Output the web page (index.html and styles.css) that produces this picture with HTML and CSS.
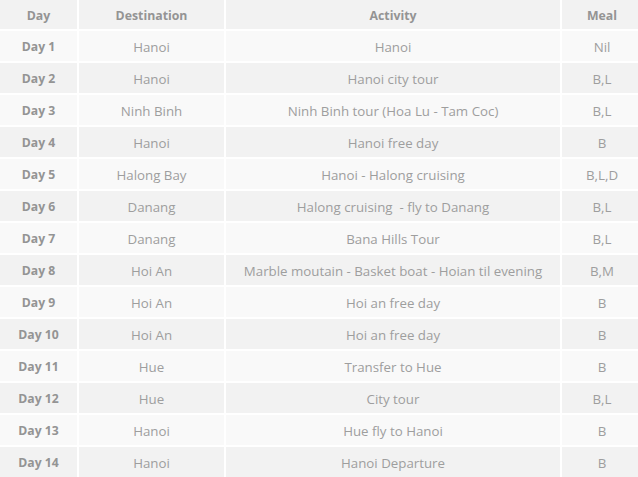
FILE: index.html
```html
<!DOCTYPE html>
<html>
<head>
<meta charset="utf-8">
<link rel="stylesheet" href="styles.css">
</head>
<body>
<table class="tour">
  <colgroup>
    <col class="c-day"><col class="c-dest"><col class="c-act"><col class="c-meal">
  </colgroup>
  <thead>
    <tr><th>Day</th><th>Destination</th><th>Activity</th><th>Meal</th></tr>
  </thead>
  <tbody>
    <tr><td class="day">Day 1</td><td>Hanoi</td><td>Hanoi</td><td>Nil</td></tr>
    <tr><td class="day">Day 2</td><td>Hanoi</td><td>Hanoi city tour</td><td>B,L</td></tr>
    <tr><td class="day">Day 3</td><td>Ninh Binh</td><td>Ninh Binh tour (Hoa Lu - Tam Coc)</td><td>B,L</td></tr>
    <tr><td class="day">Day 4</td><td>Hanoi</td><td>Hanoi free day</td><td>B</td></tr>
    <tr><td class="day">Day 5</td><td>Halong Bay</td><td>Hanoi - Halong cruising</td><td>B,L,D</td></tr>
    <tr><td class="day">Day 6</td><td>Danang</td><td>Halong cruising &nbsp;- fly to Danang</td><td>B,L</td></tr>
    <tr><td class="day">Day 7</td><td>Danang</td><td>Bana Hills Tour</td><td>B,L</td></tr>
    <tr><td class="day">Day 8</td><td>Hoi An</td><td>Marble moutain - Basket boat - Hoian til evening</td><td>B,M</td></tr>
    <tr><td class="day">Day 9</td><td>Hoi An</td><td>Hoi an free day</td><td>B</td></tr>
    <tr><td class="day">Day 10</td><td>Hoi An</td><td>Hoi an free day</td><td>B</td></tr>
    <tr><td class="day">Day 11</td><td>Hue</td><td>Transfer to Hue</td><td>B</td></tr>
    <tr><td class="day">Day 12</td><td>Hue</td><td>City tour</td><td>B,L</td></tr>
    <tr><td class="day">Day 13</td><td>Hanoi</td><td>Hue fly to Hanoi</td><td>B</td></tr>
    <tr><td class="day">Day 14</td><td>Hanoi</td><td>Hanoi Departure</td><td>B</td></tr>
  </tbody>
</table>
</body>
</html>
```
FILE: styles.css
```css
html, body {
  margin: 0;
  padding: 0;
  background: #ffffff;
  overflow: hidden;
}
.tour {
  border-collapse: separate;
  border-spacing: 2px;
  margin: -2px;
  table-layout: fixed;
  width: 642px;
  font-family: "Open Sans", sans-serif;
  font-size: 13.3px;
  color: #9e9e9e;
}
.c-day { width: 77px; }
.c-dest { width: 145px; }
.c-act { width: 334px; }
.c-meal { width: 80px; }
.tour th, .tour td {
  box-sizing: border-box;
  padding: 1px 0 0;
  text-align: center;
  vertical-align: middle;
  white-space: nowrap;
}
.tour th {
  height: 29px;
  background: #f2f2f2;
  font-weight: 700;
  font-size: 12.3px;
  color: #949494;
}
.tour td {
  height: 30px;
  background: #f9f9f9;
}
.tour tbody tr:nth-child(even) td {
  background: #f2f2f2;
}
.tour td.day {
  font-weight: 700;
  font-size: 12.2px;
  color: #949494;
}
```
